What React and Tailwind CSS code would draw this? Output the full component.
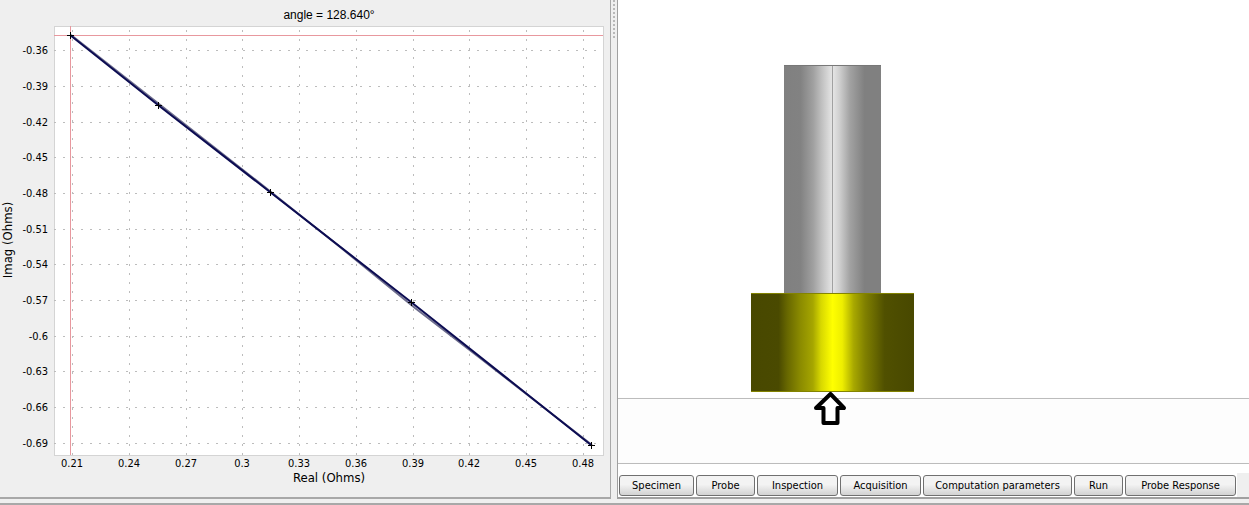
const X_TICKS = [
  { label: '0.21', x: 72 },
  { label: '0.24', x: 129 },
  { label: '0.27', x: 186 },
  { label: '0.3', x: 242 },
  { label: '0.33', x: 299 },
  { label: '0.36', x: 356 },
  { label: '0.39', x: 413 },
  { label: '0.42', x: 469 },
  { label: '0.45', x: 526 },
  { label: '0.48', x: 583 },
];

const Y_TICKS = [
  { label: '-0.36', y: 50 },
  { label: '-0.39', y: 86 },
  { label: '-0.42', y: 122 },
  { label: '-0.45', y: 157 },
  { label: '-0.48', y: 193 },
  { label: '-0.51', y: 229 },
  { label: '-0.54', y: 264 },
  { label: '-0.57', y: 300 },
  { label: '-0.6', y: 336 },
  { label: '-0.63', y: 371 },
  { label: '-0.66', y: 407 },
  { label: '-0.69', y: 443 },
];

const POINTS = [
  [70, 35],
  [158, 105],
  [270, 192],
  [411, 302],
  [591, 445],
];

const TABS = [
  { label: 'Specimen', width: 'w-[75px]' },
  { label: 'Probe', width: 'w-[59px]' },
  { label: 'Inspection', width: 'w-[81px]' },
  { label: 'Acquisition', width: 'w-[81px]' },
  { label: 'Computation parameters', width: 'w-[149px]' },
  { label: 'Run', width: 'w-[49px]' },
  { label: 'Probe Response', width: 'w-[111px]' },
];

function ImpedancePlot() {
  return (
    <svg viewBox="0 0 610 497" className="block w-full h-auto" role="img" aria-label="Impedance plane plot">
      <text x="329" y="19" textAnchor="middle" className="font-['Liberation_Sans',sans-serif] text-[12px]">angle = 128.640°</text>
      <rect x="54.5" y="26.5" width="549" height="429" fill="#fff" stroke="#d4d4d4" />

      {/* Grid */}
      <g stroke="#bcbcbc" strokeDasharray="2 7" shapeRendering="crispEdges">
        {X_TICKS.map(t => <line key={t.label} x1={t.x + 0.5} x2={t.x + 0.5} y1="455" y2="27" />)}
        {Y_TICKS.map(t => <line key={t.label} x1="54" x2="603" y1={t.y + 0.5} y2={t.y + 0.5} />)}
      </g>

      {/* Cursor */}
      <g fill="#e8989e" shapeRendering="crispEdges">
        <rect x="54" y="35" width="549" height="1" />
        <rect x="70" y="26" width="1" height="429" />
      </g>

      {/* Curves */}
      <polyline points="71,35 159,104 271,192 340,247 415,308 480,358 592,445" fill="none" stroke="#6c6c8c" strokeWidth="2" />
      <polyline points={POINTS.map(p => p.join(',')).join(' ')} fill="none" stroke="#0c0c52" strokeWidth="2" />
      {POINTS.map(([x, y]) => (
        <path key={x} d={`M${x - 3} ${y + 0.5}h7M${x + 0.5} ${y - 3}v7`} stroke="#000" />
      ))}

      <g className="font-['DejaVu_Sans_Condensed',sans-serif] text-[11px]">
        {X_TICKS.map(t => <text key={t.label} x={t.x} y="467" textAnchor="middle">{t.label}</text>)}
        {Y_TICKS.map(t => <text key={t.label} x="48" y={t.y + 4} textAnchor="end">{t.label}</text>)}
      </g>
      <g className="font-['DejaVu_Sans_Condensed',sans-serif] text-[13px]">
        <text x="329" y="482" textAnchor="middle">Real (Ohms)</text>
        <text transform="translate(12 240) rotate(-90)" textAnchor="middle">Imag (Ohms)</text>
      </g>
    </svg>
  );
}

function ProbeView() {
  return (
    <svg viewBox="0 0 631 473" className="block w-full h-auto" role="img" aria-label="Probe above the specimen">
      <defs>
        <linearGradient id="core">
          <stop offset="0" stopColor="#808080" />
          <stop offset="0.17" stopColor="#828282" />
          <stop offset="0.3" stopColor="#a0a0a0" />
          <stop offset="0.4" stopColor="#c4c4c4" />
          <stop offset="0.5" stopColor="#e6e6e6" />
          <stop offset="0.57" stopColor="#d0d0d0" />
          <stop offset="0.68" stopColor="#a2a2a2" />
          <stop offset="0.83" stopColor="#808080" />
          <stop offset="1" stopColor="#808080" />
        </linearGradient>
        <linearGradient id="coil">
          <stop offset="0" stopColor="#484800" />
          <stop offset="0.17" stopColor="#4a4a00" />
          <stop offset="0.22" stopColor="#666600" />
          <stop offset="0.3" stopColor="#8a8a00" />
          <stop offset="0.38" stopColor="#a6a600" />
          <stop offset="0.43" stopColor="#d8d800" />
          <stop offset="0.5" stopColor="#ffff00" />
          <stop offset="0.56" stopColor="#eeee00" />
          <stop offset="0.63" stopColor="#a8a800" />
          <stop offset="0.7" stopColor="#808000" />
          <stop offset="0.82" stopColor="#505000" />
          <stop offset="1" stopColor="#484800" />
        </linearGradient>
      </defs>
      <rect y="399" width="631" height="64" fill="#fdfdfd" />
      <path d="M0 398.5H631M0 463.5H631" stroke="#bcbcbc" />
      <rect x="166" y="65" width="97" height="228" fill="url(#core)" />
      <path d="M166 65.5H263" stroke="#777" />
      <path d="M214.5 66V293" stroke="#a0a0a0" />
      <rect x="133" y="293" width="163" height="99" fill="url(#coil)" />
      <path d="M133 293.5H296M133 391.5H296" stroke="#848400" />
      <path d="M212.5 394L226 408H219.5V423H205.5V408H198Z" fill="#fff" stroke="#000" strokeWidth="4" strokeLinejoin="round" />
    </svg>
  );
}

export default function App() {
  return (
    <div className="min-h-screen bg-[#efefef] text-black">
      <div className="flex border-b-2 border-[#a8a8a8] pb-1">
        <section className="flex-[611] min-w-0 border-r border-b-2 border-[#a8a8a8]">
          <ImpedancePlot />
        </section>

        {/* Splitter */}
        <div className="w-[6px] shrink-0 flex justify-center">
          <div className="h-[38px] border-l-2 border-dotted border-[#b8b8b8]" />
        </div>

        <section className="flex-[632] min-w-0 flex flex-col border-l border-b-2 border-[#a0a0a0]">
          <div className="bg-white">
            <ProbeView />
          </div>
          <nav className="flex-1 flex">
            <div className="flex items-start gap-[2px] pt-[2px] px-px bg-white">
              {TABS.map(tab => (
                <button
                  key={tab.label}
                  type="button"
                  className={`${tab.width} h-[21px] shrink-0 rounded-[3px] border border-[#707070] bg-linear-to-b from-[#f3f3f3] from-45% to-[#d2d2d2] font-['DejaVu_Sans_Condensed',sans-serif] text-[11px] leading-none whitespace-nowrap`}
                >
                  {tab.label}
                </button>
              ))}
            </div>
          </nav>
        </section>
      </div>
    </div>
  );
}
